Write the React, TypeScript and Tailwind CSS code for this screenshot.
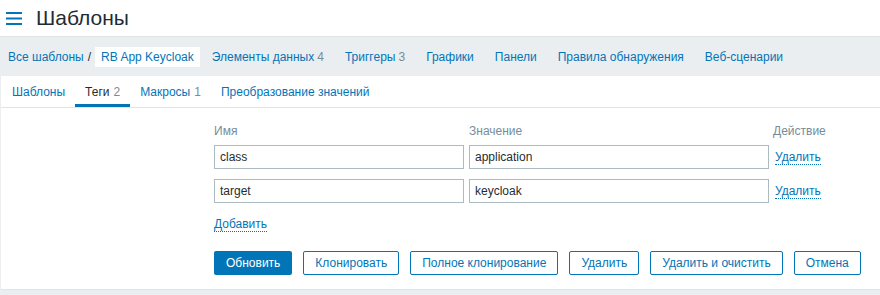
import React from 'react'

const navItems = [
  { label: 'Элементы данных', count: 4 },
  { label: 'Триггеры', count: 3 },
  { label: 'Графики' },
  { label: 'Панели' },
  { label: 'Правила обнаружения' },
  { label: 'Веб-сценарии' },
]

const tabs = [
  { label: 'Шаблоны' },
  { label: 'Теги', count: 2, active: true },
  { label: 'Макросы', count: 1 },
  { label: 'Преобразование значений' },
]

const tags = [
  { name: 'class', value: 'application' },
  { name: 'target', value: 'keycloak' },
]

const buttons = ['Клонировать', 'Полное клонирование', 'Удалить', 'Удалить и очистить', 'Отмена']

function MenuIcon() {
  return (
    <svg width="16" height="13" viewBox="0 0 16 13" className="text-[#0275b8]">
      <rect x="0" y="0" width="16" height="2" fill="currentColor" />
      <rect x="0" y="5.5" width="16" height="2" fill="currentColor" />
      <rect x="0" y="11" width="16" height="2" fill="currentColor" />
    </svg>
  )
}

export default function App() {
  return (
    <div
      className="w-[880px] h-[295px] bg-[#ebeef0] text-[12px] text-[#1f2c33] overflow-hidden"
      style={{ fontFamily: '"Liberation Sans", Arial, sans-serif' }}
    >
      {/* header */}
      <header className="h-[36px] bg-white flex items-center pl-[6px]">
        <MenuIcon />
        <h1 className="ml-[14px] text-[21px] leading-none text-[#1f2c33] -mt-[2px]">Шаблоны</h1>
      </header>

      {/* breadcrumbs + template nav */}
      <nav className="h-[40px] border-t border-[#dfe4e7] flex items-center pl-[8px] pt-px">
        <a className="text-[#0275b8]">Все шаблоны</a>
        <span className="mx-[4px] text-[#1f2c33]">/</span>
        <span className="bg-white h-[20px] flex items-center px-[6px] text-[#0275b8]">RB App Keycloak</span>
        <div className="flex items-center ml-[12px] gap-[21px]">
          {navItems.map((n) => (
            <a key={n.label} className="text-[#0275b8]">
              {n.label}
              {n.count !== undefined && <span className="ml-[3px] text-[#768d99]">{n.count}</span>}
            </a>
          ))}
        </div>
      </nav>

      {/* panel */}
      <div className="ml-px bg-white border-b border-[#dfe4e7] h-[214px]">
        <div className="h-[32px] border-b border-[#dfe4e7] flex pl-[11px]">
          {tabs.map((t) => (
            <div
              key={t.label}
              className={
                'h-[31px] flex items-center px-[10px] first:pl-0 ' +
                (t.active ? 'border-b-[3px] border-[#0275b8] pt-[3px] text-[#1f2c33]' : 'text-[#0275b8]')
              }
            >
              {t.label}
              {t.count !== undefined && <span className="ml-[4px] text-[#768d99]">{t.count}</span>}
            </div>
          ))}
        </div>

        <div className="pl-[213px] pt-[15px]">
          <div className="flex text-[#768d99] h-[16px] items-center">
            <div className="w-[255px]">Имя</div>
            <div className="w-[304px]">Значение</div>
            <div>Действие</div>
          </div>
          <div className="mt-[6px] flex flex-col gap-[10px]">
            {tags.map((t) => (
              <div key={t.name} className="flex items-center">
                <div className="w-[250px] h-[24px] border border-[#acbbc2] flex items-center px-[5px] text-[#1f2c33]">
                  {t.name}
                </div>
                <div className="ml-[5px] w-[300px] h-[24px] border border-[#acbbc2] flex items-center px-[5px] text-[#1f2c33]">
                  {t.value}
                </div>
                <a className="ml-[6px] text-[#0275b8] border-b border-dotted border-[#0275b8] leading-[14px]">Удалить</a>
              </div>
            ))}
          </div>
          <div className="mt-[13px] h-[16px] flex items-center">
            <a className="text-[#0275b8] border-b border-dotted border-[#0275b8] leading-[14px]">Добавить</a>
          </div>
          <div className="mt-[19px] flex gap-[11px]">
            <button className="h-[24px] px-[12px] bg-[#0275b8] text-white rounded-[2px]">Обновить</button>
            {buttons.map((b) => (
              <button
                key={b}
                className="h-[24px] px-[11px] bg-white border border-[#0275b8] text-[#0275b8] rounded-[2px]"
              >
                {b}
              </button>
            ))}
          </div>
        </div>
      </div>
    </div>
  )
}
